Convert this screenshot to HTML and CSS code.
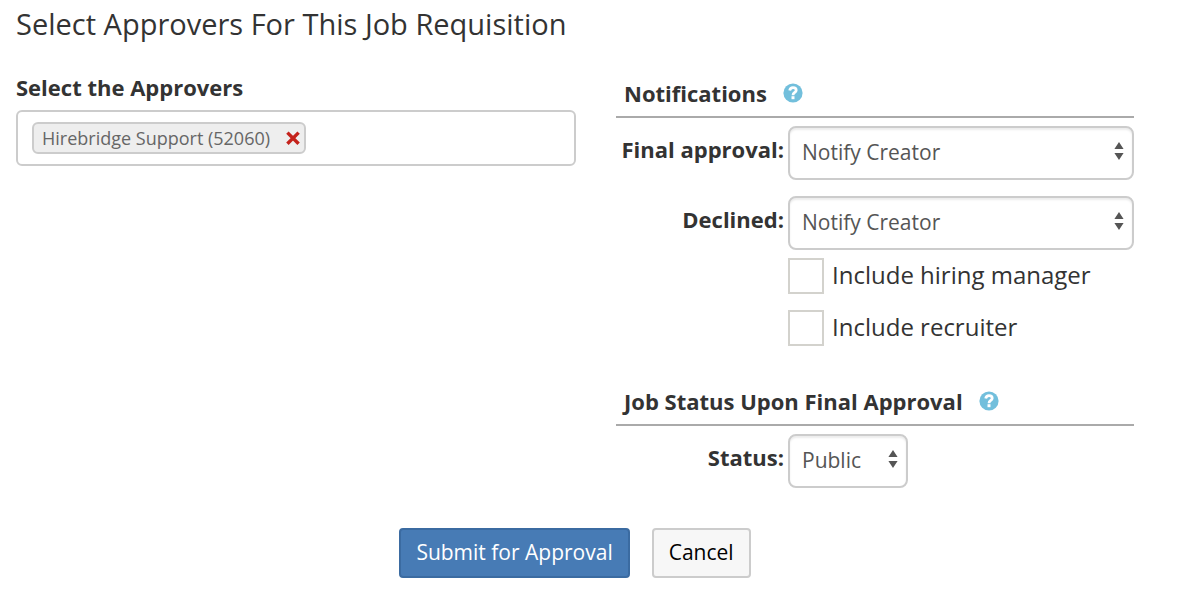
FILE: index.html
```html
<!DOCTYPE html>
<html lang="en">
<head>
<meta charset="utf-8">
<title>Select Approvers</title>
<link rel="stylesheet" href="styles.css">
</head>
<body>
<form class="page">
  <h1 class="title">Select Approvers For This Job Requisition</h1>
  <div class="columns">
    <section class="approvers">
      <h2 class="approvers-heading">Select the Approvers</h2>
      <div class="tag-box">
        <span class="tag">Hirebridge Support (52060)
          <button class="tag-remove" type="button" aria-label="Remove Hirebridge Support"><svg width="14" height="14" viewBox="0 0 14 14"><path d="M1.4 1.6L12.6 12.8M12.6 1.6L1.4 12.8" fill="none" stroke="#c4221b" stroke-width="3.4"/></svg></button>
        </span>
      </div>
    </section>
    <div class="settings">
      <section class="group">
        <h2 class="group-heading">Notifications
          <button class="help" type="button" aria-label="Help on notifications"><svg width="20" height="20" viewBox="0 0 20 20"><circle cx="10" cy="10" r="9.6" fill="#72bfdc"/><path d="M6.7 7.6C7.1 5.5 8.5 4.7 10 4.7C11.9 4.7 13.2 5.8 13.2 7.3C13.2 9.5 10 9.4 10 12.2" fill="none" stroke="#fff" stroke-width="2.8"/><path d="M8.5 13.2H11.5V16.2H8.5Z" fill="#fff"/></svg></button>
        </h2>
        <div class="field">
          <label class="field-label" for="final">Final approval:</label>
          <div class="select-wrap">
            <select class="select" id="final"><option>Notify Creator</option></select>
            <svg class="arrows" width="10" height="18" viewBox="0 0 10 18"><path d="M5 0L9.6 7H.4ZM5 18L.4 11H9.6Z" fill="#555"/></svg>
          </div>
        </div>
        <div class="field">
          <label class="field-label" for="declined">Declined:</label>
          <div class="select-wrap">
            <select class="select" id="declined"><option>Notify Creator</option></select>
            <svg class="arrows" width="10" height="18" viewBox="0 0 10 18"><path d="M5 0L9.6 7H.4ZM5 18L.4 11H9.6Z" fill="#555"/></svg>
          </div>
        </div>
        <div class="checks">
          <label class="check"><input class="checkbox" type="checkbox">Include hiring manager</label>
          <label class="check"><input class="checkbox" type="checkbox">Include recruiter</label>
        </div>
      </section>
      <section class="group">
        <h2 class="group-heading">Job Status Upon Final Approval
          <button class="help" type="button" aria-label="Help on job status"><svg width="20" height="20" viewBox="0 0 20 20"><circle cx="10" cy="10" r="9.6" fill="#72bfdc"/><path d="M6.7 7.6C7.1 5.5 8.5 4.7 10 4.7C11.9 4.7 13.2 5.8 13.2 7.3C13.2 9.5 10 9.4 10 12.2" fill="none" stroke="#fff" stroke-width="2.8"/><path d="M8.5 13.2H11.5V16.2H8.5Z" fill="#fff"/></svg></button>
        </h2>
        <div class="field">
          <label class="field-label" for="status">Status:</label>
          <div class="select-wrap select-wrap-short">
            <select class="select" id="status"><option>Public</option></select>
            <svg class="arrows" width="10" height="18" viewBox="0 0 10 18"><path d="M5 0L9.6 7H.4ZM5 18L.4 11H9.6Z" fill="#555"/></svg>
          </div>
        </div>
      </section>
    </div>
  </div>
  <div class="actions">
    <button class="button button-primary" type="submit">Submit for Approval</button>
    <button class="button" type="button">Cancel</button>
  </div>
</form>
</body>
</html>
```
FILE: styles.css
```css
* {
  box-sizing: border-box;
}

body {
  margin: 0;
  background: #fff;
  color: #333;
  font-family: "Open Sans", sans-serif;
  font-size: 24px;
}

button,
select {
  font-family: inherit;
}

svg {
  display: block;
}

.page {
  padding: 4px 52px 18px 16px;
}

.title {
  margin: 0;
  font-size: 29px;
  font-weight: 400;
  line-height: 40px;
}

.columns {
  display: grid;
  grid-template-columns: 560fr 518fr;
  gap: 40px;
  padding-top: 28px;
}

.approvers-heading {
  margin: 0;
  padding-bottom: 8px;
  font-size: 22px;
  font-weight: 700;
  line-height: 30px;
}

.tag-box {
  display: flex;
  padding: 10px 14px;
  border: 2px solid #ccc;
  border-radius: 6px;
}

.tag {
  display: flex;
  align-items: center;
  gap: 16px;
  padding: 0 4px 0 8px;
  border: 2px solid #ccc;
  border-radius: 6px;
  background: #eee;
  color: #666;
  font-size: 18px;
  line-height: 28px;
}

.tag-remove,
.help {
  padding: 0;
  border: 0;
  background: none;
}

.settings {
  display: flex;
  flex-direction: column;
  gap: 38px;
  padding-top: 4px;
}

.group-heading {
  display: flex;
  align-items: center;
  gap: 16px;
  margin: 0 0 8px;
  padding: 2px 8px 8px;
  border-bottom: 2px solid #aaa;
  font-size: 22px;
  font-weight: 700;
  line-height: 30px;
}

.field {
  display: grid;
  grid-template-columns: 168px 1fr;
  gap: 4px;
}

.field + .field {
  margin-top: 16px;
}

.field-label {
  padding-top: 8px;
  font-size: 22px;
  font-weight: 700;
  line-height: 30px;
  text-align: right;
}

.select-wrap {
  position: relative;
}

.select-wrap-short {
  width: 120px;
}

.select {
  display: block;
  width: 100%;
  height: 54px;
  padding: 0 12px 2px;
  border: 2px solid #ccc;
  border-radius: 8px;
  background: #fff;
  box-shadow: inset 0 2px 2px rgba(0, 0, 0, 0.08);
  color: #555;
  font-size: 21px;
  appearance: none;
}

.arrows {
  position: absolute;
  top: 16px;
  right: 10px;
  pointer-events: none;
}

.checks {
  display: grid;
  gap: 16px;
  padding: 8px 0 0 172px;
}

.check {
  display: flex;
  align-items: flex-start;
  gap: 8px;
  line-height: 34px;
}

.checkbox {
  width: 36px;
  height: 36px;
  margin: 0;
  border: 2px solid #d3d2cd;
  background: #fff;
  appearance: none;
}

.actions {
  display: flex;
  justify-content: center;
  gap: 22px;
  padding-top: 40px;
}

.button {
  height: 50px;
  padding: 0 15px 2px;
  border: 2px solid #ccc;
  border-radius: 4px;
  background: #f7f7f7;
  color: #000;
  font-size: 21px;
}

.button-primary {
  border-color: #3b6ba1;
  background: #477bb5;
  color: #fff;
}
```
